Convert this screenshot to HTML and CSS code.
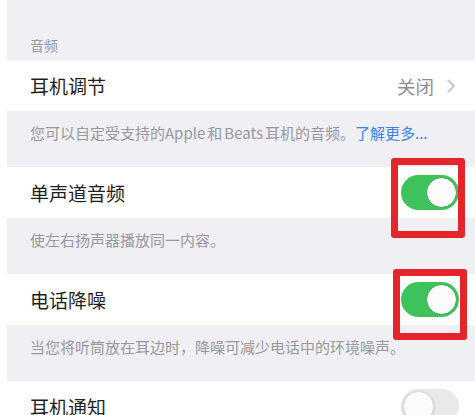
FILE: index.html
```html
<!DOCTYPE html>
<html lang="zh-CN">
<head>
<meta charset="utf-8">
<link rel="stylesheet" href="styles.css">
</head>
<body>
<div class="panel">
  <div class="group-header">音频</div>
  <div class="row">
    <span class="label">耳机调节</span>
    <span class="value">关闭
      <svg class="chevron" width="9" height="14" viewBox="0 0 9 14"><polyline points="1.5,1.5 7,7 1.5,12.5" fill="none" stroke="#c6c6cb" stroke-width="2" stroke-linecap="round" stroke-linejoin="round"/></svg>
    </span>
  </div>
  <div class="footer">您可以自定受支持的Apple<span class="gap"></span>和<span class="gap"></span>Beats<span class="gap"></span>耳机的音频。<span class="link">了解更多...</span></div>
  <div class="row">
    <span class="label">单声道音频</span>
    <span class="switch on"><span class="knob"></span></span>
  </div>
  <div class="footer">使左右扬声器播放同一内容。</div>
  <div class="row">
    <span class="label">电话降噪</span>
    <span class="switch on"><span class="knob"></span></span>
  </div>
  <div class="footer">当您将听筒放在耳边时，降噪可减少电话中的环境噪声。</div>
  <div class="row">
    <span class="label">耳机通知</span>
    <span class="switch off"><span class="knob"></span></span>
  </div>
  <div class="mark mark-1"></div>
  <div class="mark mark-2"></div>
</div>
</body>
</html>
```
FILE: styles.css
```css
html, body {
  margin: 0;
  padding: 0;
  background: #ffffff;
}
body {
  font-family: "Noto Sans CJK SC", "Noto Sans", sans-serif;
  height: 415px;
  overflow: hidden;
}
.panel {
  position: relative;
  margin-left: 7px;
  background: #efeff4;
  display: flex;
  flex-direction: column;
}
.group-header {
  height: 60px;
  flex: none;
  box-sizing: border-box;
  display: flex;
  align-items: flex-end;
  padding: 0 0 5px 23px;
  font-size: 14px;
  line-height: 20px;
  color: #9b9ba0;
}
.row {
  height: 51px;
  flex: none;
  box-sizing: border-box;
  background: #ffffff;
  display: flex;
  align-items: center;
  justify-content: space-between;
  padding: 0 16px 0 23px;
}
.label {
  font-size: 19px;
  color: #1f1f21;
}
.value {
  display: flex;
  align-items: center;
  gap: 13px;
  font-size: 18.5px;
  color: #8e8e93;
  padding-right: 3px;
}
.footer {
  height: 56px;
  flex: none;
  box-sizing: border-box;
  padding: 12px 0 0 23px;
  font-size: 15px;
  line-height: 20px;
  color: #98989d;
  white-space: nowrap;
}
.gap {
  display: inline-block;
  width: 2px;
}
.link {
  color: #3b82f0;
}
.switch {
  width: 58px;
  height: 35px;
  border-radius: 18px;
  box-sizing: border-box;
  display: flex;
  align-items: center;
  padding: 2px;
  flex: none;
}
.switch.on {
  background: #3ec25b;
  justify-content: flex-end;
}
.switch.off {
  background: #e9e9ec;
  justify-content: flex-start;
}
.knob {
  width: 31px;
  height: 31px;
  border-radius: 50%;
  background: #fbfbfb;
  box-sizing: border-box;
}
.switch.on .knob {
  border: 1px solid #33a84d;
}
.switch.off .knob {
  box-shadow: 0 1px 3px rgba(0,0,0,0.18);
  border: 1px solid #dcdcdf;
}
.mark {
  position: absolute;
  border: 7px solid #e4252b;
  border-radius: 3px;
  box-sizing: border-box;
}
.mark-1 {
  left: 384px;
  top: 158px;
  width: 74px;
  height: 80px;
}
.mark-2 {
  left: 386px;
  top: 269px;
  width: 74px;
  height: 71px;
}
```
